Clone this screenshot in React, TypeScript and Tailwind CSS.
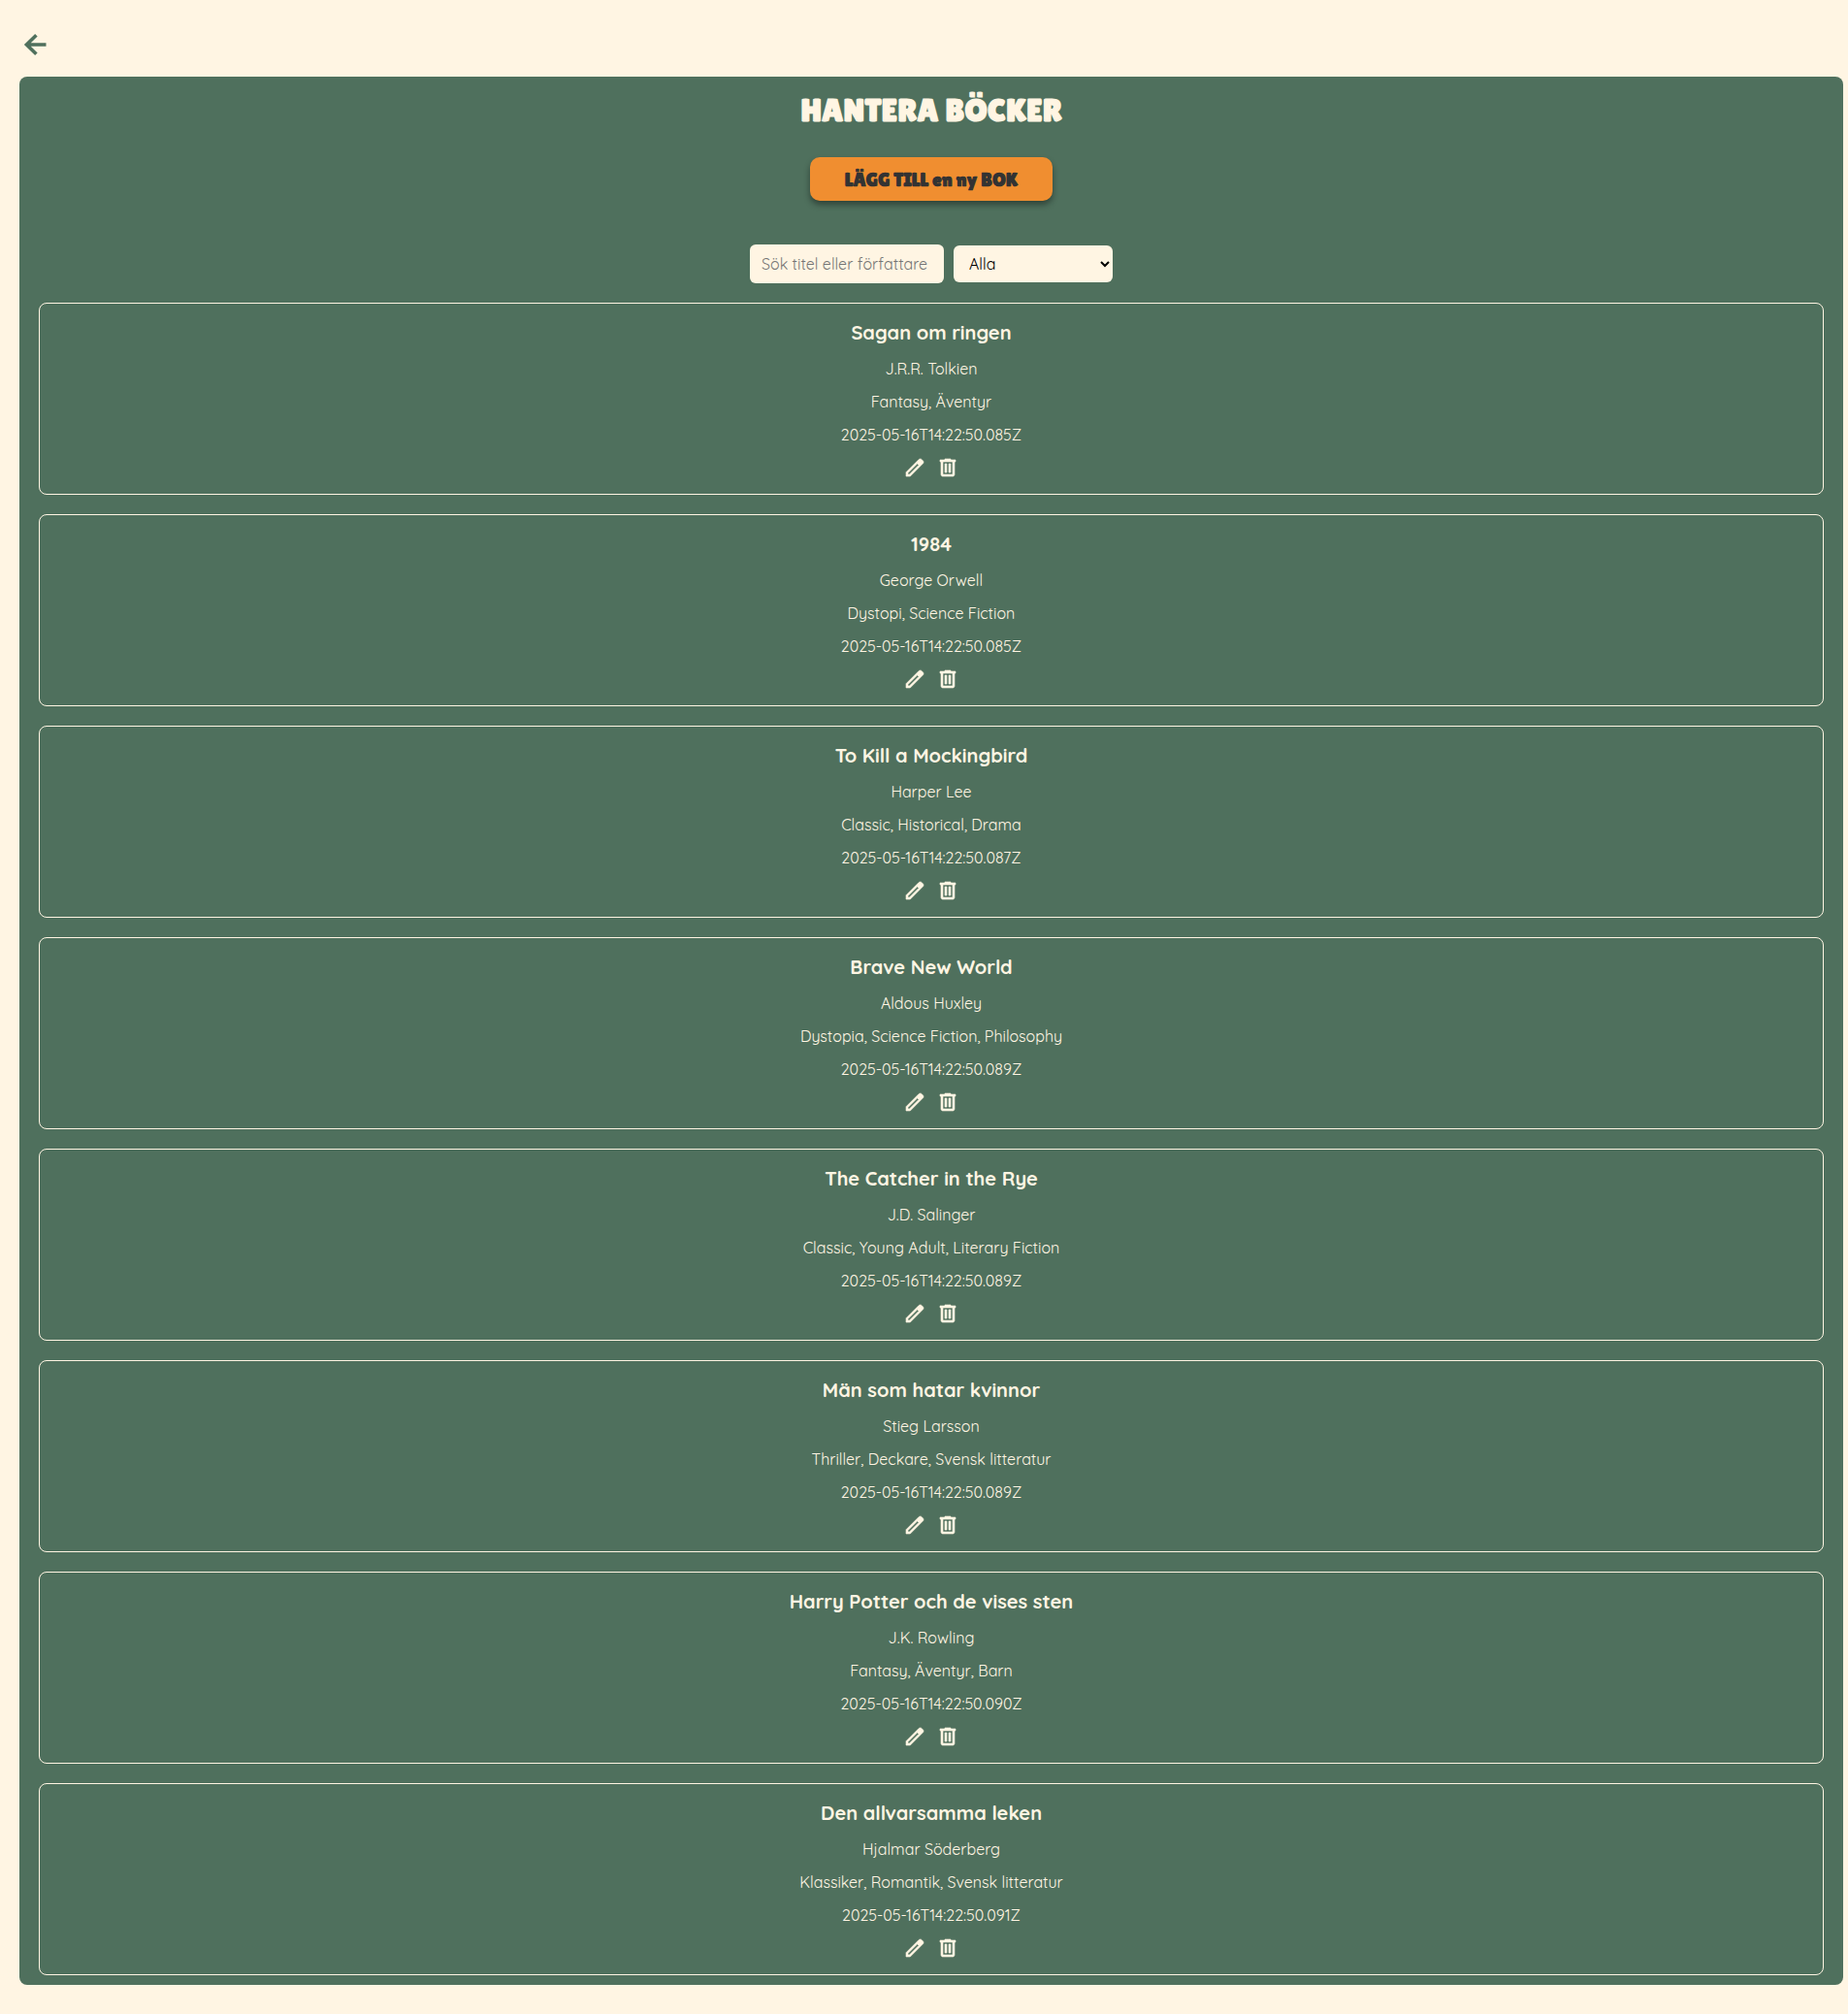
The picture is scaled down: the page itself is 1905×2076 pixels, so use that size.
import { useState } from "react";

type Book = { title: string; author: string; genres: string; created: string };

const books: Book[] = [
  { title: "Sagan om ringen", author: "J.R.R. Tolkien", genres: "Fantasy, Äventyr", created: "2025-05-16T14:22:50.085Z" },
  { title: "1984", author: "George Orwell", genres: "Dystopi, Science Fiction", created: "2025-05-16T14:22:50.085Z" },
  { title: "To Kill a Mockingbird", author: "Harper Lee", genres: "Classic, Historical, Drama", created: "2025-05-16T14:22:50.087Z" },
  { title: "Brave New World", author: "Aldous Huxley", genres: "Dystopia, Science Fiction, Philosophy", created: "2025-05-16T14:22:50.089Z" },
  { title: "The Catcher in the Rye", author: "J.D. Salinger", genres: "Classic, Young Adult, Literary Fiction", created: "2025-05-16T14:22:50.089Z" },
  { title: "Män som hatar kvinnor", author: "Stieg Larsson", genres: "Thriller, Deckare, Svensk litteratur", created: "2025-05-16T14:22:50.089Z" },
  { title: "Harry Potter och de vises sten", author: "J.K. Rowling", genres: "Fantasy, Äventyr, Barn", created: "2025-05-16T14:22:50.090Z" },
  { title: "Den allvarsamma leken", author: "Hjalmar Söderberg", genres: "Klassiker, Romantik, Svensk litteratur", created: "2025-05-16T14:22:50.091Z" },
];

function BackIcon() {
  return (
    <svg viewBox="0 0 32 32" className="size-8" fill="none" stroke="currentColor" strokeWidth="3.6" aria-hidden="true">
      <path d="M27.5 16H8M17.4 6.2 7.4 16l10 9.8" />
    </svg>
  );
}

function EditIcon() {
  return (
    <svg viewBox="0 -960 960 960" className="size-6" fill="currentColor" stroke="currentColor" strokeWidth="24" aria-hidden="true">
      <path d="M200-200h57l391-391-57-57-391 391v57Zm-80 80v-170l528-527q12-11 26.5-17t30.5-6q16 0 31 6t26 18l55 56q12 11 17.5 26t5.5 30q0 16-5.5 30.5T817-647L290-120H120Zm640-584-56-56 56 56Zm-141 85-28-29 57 57-29-28Z" />
    </svg>
  );
}

function DeleteIcon() {
  return (
    <svg viewBox="0 -960 960 960" className="size-6" fill="currentColor" stroke="currentColor" strokeWidth="24" aria-hidden="true">
      <path d="M280-120q-33 0-56.5-23.5T200-200v-520h-40v-80h200v-40h240v40h200v80h-40v520q0 33-23.5 56.5T680-120H280Zm400-600H280v520h400v-520ZM360-280h80v-360h-80v360Zm160 0h80v-360h-80v360Z" />
    </svg>
  );
}

function BookCard({ book }: { book: Book }) {
  return (
    <li className="flex flex-col items-center rounded-lg border border-[#fff5e3] px-4 pt-[17px] pb-[15px] text-center">
      <h2 className="mb-3.5 text-xl leading-[26px] font-bold">{book.title}</h2>
      <div className="flex flex-col gap-3.5 text-base leading-5">
        <p>{book.author}</p>
        <p>{book.genres}</p>
        <p>{book.created}</p>
      </div>
      <div className="mt-3 flex gap-2.5">
        <button type="button" aria-label={`Redigera ${book.title}`}>
          <EditIcon />
        </button>
        <button type="button" aria-label={`Ta bort ${book.title}`}>
          <DeleteIcon />
        </button>
      </div>
    </li>
  );
}

export default function App() {
  const [query, setQuery] = useState("");
  const [genre, setGenre] = useState("Alla");
  const term = query.toLowerCase();
  const visible = books.filter(
    (b) =>
      (b.title + " " + b.author).toLowerCase().includes(term) &&
      (genre === "Alla" || b.genres.includes(genre)),
  );

  return (
    <div className="min-h-screen bg-[#fff5e3] pt-[30px] pr-[5px] pb-[30px] pl-5 font-[Quicksand,Lato,sans-serif] text-[#fff5e3]">
      <a href="#" aria-label="Tillbaka" className="block w-8 text-[#4f705d]">
        <BackIcon />
      </a>
      <main className="mt-[17px] flex flex-col rounded-lg bg-[#4f705d] px-5 pb-2.5">
        <h1 className="mt-4 text-center font-['Luckiest_Guy','Lilita_One',Lato,sans-serif] text-[34px] leading-9 font-bold">HANTERA BÖCKER</h1>
        <button
          type="button"
          className="mt-[31px] h-[45px] w-[250px] self-center rounded-[10px] bg-[#f08e30] font-['Luckiest_Guy','Lilita_One',Lato,sans-serif] text-xl font-bold text-[#333333] shadow-[0_4px_6px_rgba(0,0,0,0.4)]"
        >
          LÄGG TILL en ny BOK
        </button>
        <div className="mt-[45px] flex items-center justify-center gap-2.5">
          <input
            type="text"
            aria-label="Sök titel eller författare"
            placeholder="Sök titel eller författare"
            value={query}
            onChange={(e) => setQuery(e.target.value)}
            className="h-10 w-[200px] rounded-md bg-[#fff5e3] px-3 text-base text-black placeholder:text-[#757575]"
          />
          <select
            aria-label="Genre"
            value={genre}
            onChange={(e) => setGenre(e.target.value)}
            className="h-[38px] w-[164px] rounded-md bg-[#fff5e3] pl-3 text-base text-black"
          >
            <option>Alla</option>
            <option>Fantasy</option>
            <option>Science Fiction</option>
            <option>Classic</option>
            <option>Thriller</option>
            <option>Romantik</option>
          </select>
        </div>
        <ul className="mt-5 flex flex-col gap-5">
          {visible.map((book) => (
            <BookCard key={book.title} book={book} />
          ))}
        </ul>
      </main>
    </div>
  );
}
